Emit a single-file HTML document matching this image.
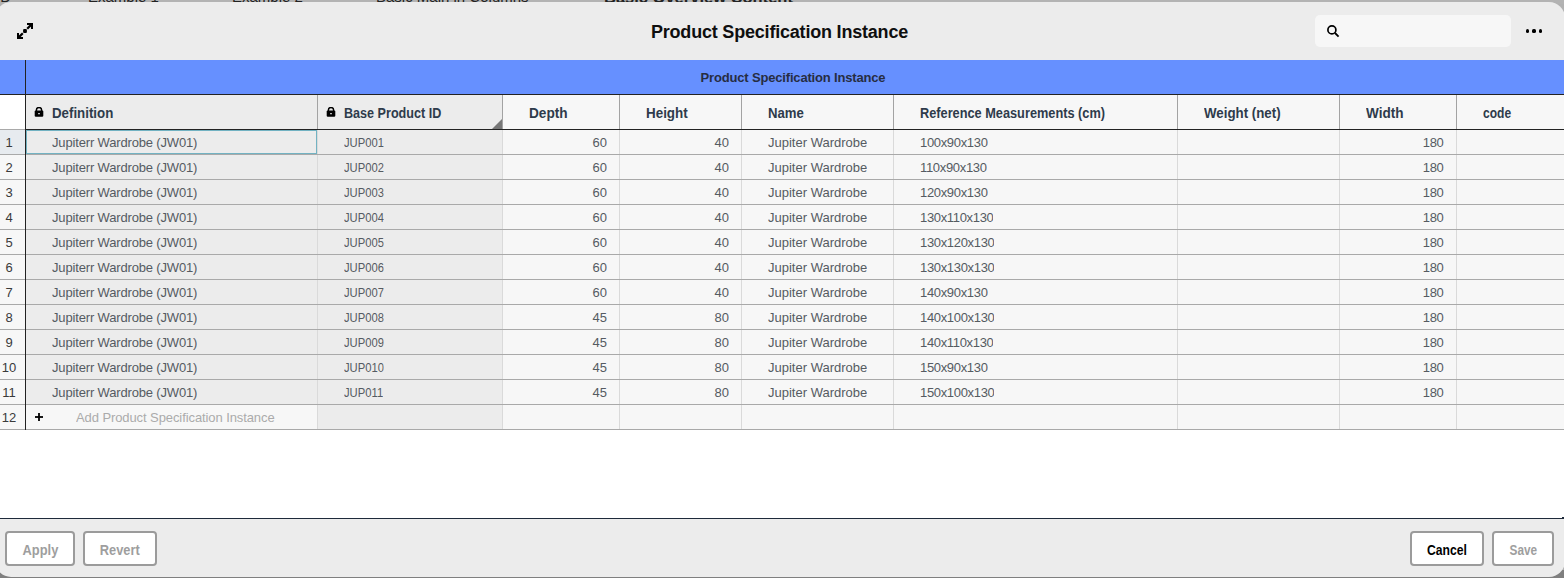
<!DOCTYPE html>
<html><head><meta charset="utf-8"><style>
*{box-sizing:border-box;margin:0;padding:0}
html,body{width:1564px;height:578px;overflow:hidden;background:#b1b1b1;font-family:"Liberation Sans",sans-serif}
.a{position:absolute}
.t{position:absolute;white-space:nowrap}
.hd{font-weight:bold;font-size:14px;color:#2e3b4b;line-height:34px;top:96px}
.cell{position:absolute;font-size:13px;color:#555b62;line-height:24px;margin-top:1px;white-space:nowrap;overflow:hidden}
.rn{position:absolute;font-size:13px;color:#3a3a3a;line-height:24px;left:0;width:18px;margin-top:1px;white-space:nowrap}
.btn{position:absolute;top:531px;height:35px;border:2px solid #9b9b9b;border-radius:4px;background:#fff;font-weight:bold;font-size:14px;line-height:34px;text-align:center;color:#9e9e9e}
</style></head><body>

<div class="a" style="left:0;top:0;width:1564px;height:4px;background:#b3b3b3;overflow:hidden">
<div class="t" style="left:-4px;top:-11px;font-size:15px;line-height:16px;font-weight:normal;color:#222">ID</div>
<div class="t" style="left:88px;top:-11px;font-size:15px;line-height:16px;font-weight:normal;color:#222">Example 1</div>
<div class="t" style="left:232px;top:-11px;font-size:15px;line-height:16px;font-weight:normal;color:#222">Example 2</div>
<div class="t" style="left:376px;top:-11px;font-size:15px;line-height:16px;font-weight:normal;color:#222">Basic Main in Columns</div>
<div class="t" style="left:604px;top:-11px;font-size:16.5px;line-height:16px;font-weight:bold;color:#222">Basic Overview Content</div>
</div>
<div class="a" style="left:0;top:570px;width:1564px;height:8px;background:#7f7f7f"></div>
<div class="a" style="left:-5px;top:2px;width:1570px;height:575px;border-radius:16px;background:#ececec;overflow:hidden"></div>
<svg class="a" style="left:17px;top:23px" width="16" height="16" viewBox="0 0 16 16"><path d="M10 0H16V6H14V2H10Z" fill="#000"/><path d="M14.6 1.4L10.2 5.8" stroke="#000" stroke-width="2.2"/><rect x="6.1" y="6.1" width="3.8" height="3.8" rx="1" fill="#000"/><path d="M0 10H2V14H6V16H0Z" fill="#000"/><path d="M1.4 14.6L5.8 10.2" stroke="#000" stroke-width="2.2"/></svg>
<div class="t" style="left:0;width:1559px;text-align:center;top:23px;font-size:18px;line-height:18px;font-weight:bold;color:#0f0f0f;letter-spacing:-0.2px">Product Specification Instance</div>
<div class="a" style="left:1315px;top:15px;width:196px;height:32px;border-radius:5px;background:#f7f7f7"></div>
<svg class="a" style="left:1326px;top:24px" width="14" height="14" viewBox="0 0 14 14"><circle cx="5.9" cy="5.9" r="4.0" fill="none" stroke="#000" stroke-width="1.7"/><path d="M9 9L12.6 12.6" stroke="#000" stroke-width="1.8"/></svg>
<div class="a" style="left:1526.0px;top:29.4px;width:3.2px;height:3.2px;border-radius:50%;background:#000"></div>
<div class="a" style="left:1532.4px;top:29.4px;width:3.2px;height:3.2px;border-radius:50%;background:#000"></div>
<div class="a" style="left:1538.8000000000002px;top:29.4px;width:3.2px;height:3.2px;border-radius:50%;background:#000"></div>
<div class="a" style="left:0;top:60px;width:1564px;height:459px;background:#fff"></div>
<div class="a" style="left:0;top:60px;width:1564px;height:34px;background:#6690ff"></div>
<div class="t" style="left:24px;width:1538px;text-align:center;top:60px;line-height:35px;font-size:13px;font-weight:bold;color:#262d42;letter-spacing:-0.17px">Product Specification Instance</div>
<div class="a" style="left:0;top:94px;width:1564px;height:1px;background:#222"></div>
<div class="a" style="left:0;top:129px;width:25px;height:1px;background:#a9a9a9"></div>
<div class="a" style="left:26px;top:129px;width:1538px;height:1px;background:#222"></div>
<div class="a" style="left:26px;top:95px;width:291px;height:34px;background:#ececec"></div>
<div class="a" style="left:317px;top:95px;width:1px;height:34px;background:#a3a3a3"></div>
<svg width="10" height="11" viewBox="0 0 10 11" style="position:absolute;left:34px;top:107px"><path d="M2.4 4V3.1A2.6 2.6 0 0 1 7.6 3.1V4" fill="none" stroke="#000" stroke-width="1.45"/><rect x="0.7" y="3.4" width="8.6" height="6.4" rx="1.1" fill="#000"/><rect x="4.2" y="6" width="1.6" height="1.3" rx="0.5" fill="#fff"/></svg>
<div class="t hd" style="left:52px;transform-origin:0 0;transform:scaleX(0.949)">Definition</div>
<div class="a" style="left:318px;top:95px;width:184px;height:34px;background:#ececec"></div>
<div class="a" style="left:502px;top:95px;width:1px;height:34px;background:#a3a3a3"></div>
<svg width="10" height="11" viewBox="0 0 10 11" style="position:absolute;left:326px;top:107px"><path d="M2.4 4V3.1A2.6 2.6 0 0 1 7.6 3.1V4" fill="none" stroke="#000" stroke-width="1.45"/><rect x="0.7" y="3.4" width="8.6" height="6.4" rx="1.1" fill="#000"/><rect x="4.2" y="6" width="1.6" height="1.3" rx="0.5" fill="#fff"/></svg>
<svg class="a" style="left:492px;top:119px" width="10" height="10"><path d="M10 0V10H0Z" fill="#777"/></svg>
<div class="t hd" style="left:344px;transform-origin:0 0;transform:scaleX(0.899)">Base Product ID</div>
<div class="a" style="left:503px;top:95px;width:116px;height:34px;background:#f7f7f7"></div>
<div class="a" style="left:619px;top:95px;width:1px;height:34px;background:#a3a3a3"></div>
<div class="t hd" style="left:529px;transform-origin:0 0;transform:scaleX(0.974)">Depth</div>
<div class="a" style="left:620px;top:95px;width:121px;height:34px;background:#f7f7f7"></div>
<div class="a" style="left:741px;top:95px;width:1px;height:34px;background:#a3a3a3"></div>
<div class="t hd" style="left:646px;transform-origin:0 0;transform:scaleX(0.958)">Height</div>
<div class="a" style="left:742px;top:95px;width:151px;height:34px;background:#f7f7f7"></div>
<div class="a" style="left:893px;top:95px;width:1px;height:34px;background:#a3a3a3"></div>
<div class="t hd" style="left:768px;transform-origin:0 0;transform:scaleX(0.94)">Name</div>
<div class="a" style="left:894px;top:95px;width:283px;height:34px;background:#f7f7f7"></div>
<div class="a" style="left:1177px;top:95px;width:1px;height:34px;background:#a3a3a3"></div>
<div class="t hd" style="left:920px;transform-origin:0 0;transform:scaleX(0.911)">Reference Measurements (cm)</div>
<div class="a" style="left:1178px;top:95px;width:161px;height:34px;background:#f7f7f7"></div>
<div class="a" style="left:1339px;top:95px;width:1px;height:34px;background:#a3a3a3"></div>
<div class="t hd" style="left:1204px;transform-origin:0 0;transform:scaleX(0.95)">Weight (net)</div>
<div class="a" style="left:1340px;top:95px;width:116px;height:34px;background:#f7f7f7"></div>
<div class="a" style="left:1456px;top:95px;width:1px;height:34px;background:#a3a3a3"></div>
<div class="t hd" style="left:1366px;transform-origin:0 0;transform:scaleX(0.968)">Width</div>
<div class="a" style="left:1457px;top:95px;width:107px;height:34px;background:#f7f7f7"></div>
<div class="t hd" style="left:1483px;transform-origin:0 0;transform:scaleX(0.86)">code</div>
<div class="a" style="left:1562px;top:517px;width:2px;height:1px;background:#1e2a3a"></div>
<div class="a" style="left:0;top:130px;width:25px;height:24px;background:#e7ebef"></div>
<div class="rn" style="top:130px;text-align:center">1</div>
<div class="a" style="left:26px;top:130px;width:291px;height:24px;background:#ececec"></div>
<div class="a" style="left:317px;top:130px;width:1px;height:24px;background:#dadada"></div>
<div class="cell" style="left:52px;top:130px;letter-spacing:-0.16px">Jupiterr Wardrobe (JW01)</div>
<div class="a" style="left:318px;top:130px;width:184px;height:24px;background:#ececec"></div>
<div class="a" style="left:502px;top:130px;width:1px;height:24px;background:#dadada"></div>
<div class="cell" style="left:344px;top:130px;transform-origin:0 0;transform:scaleX(0.865)">JUP001</div>
<div class="a" style="left:503px;top:130px;width:116px;height:24px;background:#f7f7f7"></div>
<div class="a" style="left:619px;top:130px;width:1px;height:24px;background:#dadada"></div>
<div class="cell" style="left:503px;width:103.85px;text-align:right;top:130px;letter-spacing:-0.1px">60</div>
<div class="a" style="left:620px;top:130px;width:121px;height:24px;background:#f7f7f7"></div>
<div class="a" style="left:741px;top:130px;width:1px;height:24px;background:#dadada"></div>
<div class="cell" style="left:620px;width:108.85px;text-align:right;top:130px;letter-spacing:-0.1px">40</div>
<div class="a" style="left:742px;top:130px;width:151px;height:24px;background:#f7f7f7"></div>
<div class="a" style="left:893px;top:130px;width:1px;height:24px;background:#dadada"></div>
<div class="cell" style="left:768px;top:130px;letter-spacing:0px">Jupiter Wardrobe</div>
<div class="a" style="left:894px;top:130px;width:283px;height:24px;background:#f7f7f7"></div>
<div class="a" style="left:1177px;top:130px;width:1px;height:24px;background:#dadada"></div>
<div class="cell" style="left:920px;top:130px;letter-spacing:-0.33px">100x90x130</div>
<div class="a" style="left:1178px;top:130px;width:161px;height:24px;background:#f7f7f7"></div>
<div class="a" style="left:1339px;top:130px;width:1px;height:24px;background:#dadada"></div>
<div class="a" style="left:1340px;top:130px;width:116px;height:24px;background:#f7f7f7"></div>
<div class="a" style="left:1456px;top:130px;width:1px;height:24px;background:#dadada"></div>
<div class="cell" style="left:1340px;width:103.55px;text-align:right;top:130px;letter-spacing:-0.3px">180</div>
<div class="a" style="left:1457px;top:130px;width:107px;height:24px;background:#f7f7f7"></div>
<div class="a" style="left:0;top:154px;width:1564px;height:1px;background:#a9a9a9"></div>
<div class="a" style="left:0;top:155px;width:25px;height:24px;background:#f7f7f7"></div>
<div class="rn" style="top:155px;text-align:center">2</div>
<div class="a" style="left:26px;top:155px;width:291px;height:24px;background:#ececec"></div>
<div class="a" style="left:317px;top:155px;width:1px;height:24px;background:#dadada"></div>
<div class="cell" style="left:52px;top:155px;letter-spacing:-0.16px">Jupiterr Wardrobe (JW01)</div>
<div class="a" style="left:318px;top:155px;width:184px;height:24px;background:#ececec"></div>
<div class="a" style="left:502px;top:155px;width:1px;height:24px;background:#dadada"></div>
<div class="cell" style="left:344px;top:155px;transform-origin:0 0;transform:scaleX(0.865)">JUP002</div>
<div class="a" style="left:503px;top:155px;width:116px;height:24px;background:#f7f7f7"></div>
<div class="a" style="left:619px;top:155px;width:1px;height:24px;background:#dadada"></div>
<div class="cell" style="left:503px;width:103.85px;text-align:right;top:155px;letter-spacing:-0.1px">60</div>
<div class="a" style="left:620px;top:155px;width:121px;height:24px;background:#f7f7f7"></div>
<div class="a" style="left:741px;top:155px;width:1px;height:24px;background:#dadada"></div>
<div class="cell" style="left:620px;width:108.85px;text-align:right;top:155px;letter-spacing:-0.1px">40</div>
<div class="a" style="left:742px;top:155px;width:151px;height:24px;background:#f7f7f7"></div>
<div class="a" style="left:893px;top:155px;width:1px;height:24px;background:#dadada"></div>
<div class="cell" style="left:768px;top:155px;letter-spacing:0px">Jupiter Wardrobe</div>
<div class="a" style="left:894px;top:155px;width:283px;height:24px;background:#f7f7f7"></div>
<div class="a" style="left:1177px;top:155px;width:1px;height:24px;background:#dadada"></div>
<div class="cell" style="left:920px;top:155px;letter-spacing:-0.33px">110x90x130</div>
<div class="a" style="left:1178px;top:155px;width:161px;height:24px;background:#f7f7f7"></div>
<div class="a" style="left:1339px;top:155px;width:1px;height:24px;background:#dadada"></div>
<div class="a" style="left:1340px;top:155px;width:116px;height:24px;background:#f7f7f7"></div>
<div class="a" style="left:1456px;top:155px;width:1px;height:24px;background:#dadada"></div>
<div class="cell" style="left:1340px;width:103.55px;text-align:right;top:155px;letter-spacing:-0.3px">180</div>
<div class="a" style="left:1457px;top:155px;width:107px;height:24px;background:#f7f7f7"></div>
<div class="a" style="left:0;top:179px;width:1564px;height:1px;background:#a9a9a9"></div>
<div class="a" style="left:0;top:180px;width:25px;height:24px;background:#f7f7f7"></div>
<div class="rn" style="top:180px;text-align:center">3</div>
<div class="a" style="left:26px;top:180px;width:291px;height:24px;background:#ececec"></div>
<div class="a" style="left:317px;top:180px;width:1px;height:24px;background:#dadada"></div>
<div class="cell" style="left:52px;top:180px;letter-spacing:-0.16px">Jupiterr Wardrobe (JW01)</div>
<div class="a" style="left:318px;top:180px;width:184px;height:24px;background:#ececec"></div>
<div class="a" style="left:502px;top:180px;width:1px;height:24px;background:#dadada"></div>
<div class="cell" style="left:344px;top:180px;transform-origin:0 0;transform:scaleX(0.865)">JUP003</div>
<div class="a" style="left:503px;top:180px;width:116px;height:24px;background:#f7f7f7"></div>
<div class="a" style="left:619px;top:180px;width:1px;height:24px;background:#dadada"></div>
<div class="cell" style="left:503px;width:103.85px;text-align:right;top:180px;letter-spacing:-0.1px">60</div>
<div class="a" style="left:620px;top:180px;width:121px;height:24px;background:#f7f7f7"></div>
<div class="a" style="left:741px;top:180px;width:1px;height:24px;background:#dadada"></div>
<div class="cell" style="left:620px;width:108.85px;text-align:right;top:180px;letter-spacing:-0.1px">40</div>
<div class="a" style="left:742px;top:180px;width:151px;height:24px;background:#f7f7f7"></div>
<div class="a" style="left:893px;top:180px;width:1px;height:24px;background:#dadada"></div>
<div class="cell" style="left:768px;top:180px;letter-spacing:0px">Jupiter Wardrobe</div>
<div class="a" style="left:894px;top:180px;width:283px;height:24px;background:#f7f7f7"></div>
<div class="a" style="left:1177px;top:180px;width:1px;height:24px;background:#dadada"></div>
<div class="cell" style="left:920px;top:180px;letter-spacing:-0.33px">120x90x130</div>
<div class="a" style="left:1178px;top:180px;width:161px;height:24px;background:#f7f7f7"></div>
<div class="a" style="left:1339px;top:180px;width:1px;height:24px;background:#dadada"></div>
<div class="a" style="left:1340px;top:180px;width:116px;height:24px;background:#f7f7f7"></div>
<div class="a" style="left:1456px;top:180px;width:1px;height:24px;background:#dadada"></div>
<div class="cell" style="left:1340px;width:103.55px;text-align:right;top:180px;letter-spacing:-0.3px">180</div>
<div class="a" style="left:1457px;top:180px;width:107px;height:24px;background:#f7f7f7"></div>
<div class="a" style="left:0;top:204px;width:1564px;height:1px;background:#a9a9a9"></div>
<div class="a" style="left:0;top:205px;width:25px;height:24px;background:#f7f7f7"></div>
<div class="rn" style="top:205px;text-align:center">4</div>
<div class="a" style="left:26px;top:205px;width:291px;height:24px;background:#ececec"></div>
<div class="a" style="left:317px;top:205px;width:1px;height:24px;background:#dadada"></div>
<div class="cell" style="left:52px;top:205px;letter-spacing:-0.16px">Jupiterr Wardrobe (JW01)</div>
<div class="a" style="left:318px;top:205px;width:184px;height:24px;background:#ececec"></div>
<div class="a" style="left:502px;top:205px;width:1px;height:24px;background:#dadada"></div>
<div class="cell" style="left:344px;top:205px;transform-origin:0 0;transform:scaleX(0.865)">JUP004</div>
<div class="a" style="left:503px;top:205px;width:116px;height:24px;background:#f7f7f7"></div>
<div class="a" style="left:619px;top:205px;width:1px;height:24px;background:#dadada"></div>
<div class="cell" style="left:503px;width:103.85px;text-align:right;top:205px;letter-spacing:-0.1px">60</div>
<div class="a" style="left:620px;top:205px;width:121px;height:24px;background:#f7f7f7"></div>
<div class="a" style="left:741px;top:205px;width:1px;height:24px;background:#dadada"></div>
<div class="cell" style="left:620px;width:108.85px;text-align:right;top:205px;letter-spacing:-0.1px">40</div>
<div class="a" style="left:742px;top:205px;width:151px;height:24px;background:#f7f7f7"></div>
<div class="a" style="left:893px;top:205px;width:1px;height:24px;background:#dadada"></div>
<div class="cell" style="left:768px;top:205px;letter-spacing:0px">Jupiter Wardrobe</div>
<div class="a" style="left:894px;top:205px;width:283px;height:24px;background:#f7f7f7"></div>
<div class="a" style="left:1177px;top:205px;width:1px;height:24px;background:#dadada"></div>
<div class="cell" style="left:920px;top:205px;letter-spacing:-0.33px">130x110x130</div>
<div class="a" style="left:1178px;top:205px;width:161px;height:24px;background:#f7f7f7"></div>
<div class="a" style="left:1339px;top:205px;width:1px;height:24px;background:#dadada"></div>
<div class="a" style="left:1340px;top:205px;width:116px;height:24px;background:#f7f7f7"></div>
<div class="a" style="left:1456px;top:205px;width:1px;height:24px;background:#dadada"></div>
<div class="cell" style="left:1340px;width:103.55px;text-align:right;top:205px;letter-spacing:-0.3px">180</div>
<div class="a" style="left:1457px;top:205px;width:107px;height:24px;background:#f7f7f7"></div>
<div class="a" style="left:0;top:229px;width:1564px;height:1px;background:#a9a9a9"></div>
<div class="a" style="left:0;top:230px;width:25px;height:24px;background:#f7f7f7"></div>
<div class="rn" style="top:230px;text-align:center">5</div>
<div class="a" style="left:26px;top:230px;width:291px;height:24px;background:#ececec"></div>
<div class="a" style="left:317px;top:230px;width:1px;height:24px;background:#dadada"></div>
<div class="cell" style="left:52px;top:230px;letter-spacing:-0.16px">Jupiterr Wardrobe (JW01)</div>
<div class="a" style="left:318px;top:230px;width:184px;height:24px;background:#ececec"></div>
<div class="a" style="left:502px;top:230px;width:1px;height:24px;background:#dadada"></div>
<div class="cell" style="left:344px;top:230px;transform-origin:0 0;transform:scaleX(0.865)">JUP005</div>
<div class="a" style="left:503px;top:230px;width:116px;height:24px;background:#f7f7f7"></div>
<div class="a" style="left:619px;top:230px;width:1px;height:24px;background:#dadada"></div>
<div class="cell" style="left:503px;width:103.85px;text-align:right;top:230px;letter-spacing:-0.1px">60</div>
<div class="a" style="left:620px;top:230px;width:121px;height:24px;background:#f7f7f7"></div>
<div class="a" style="left:741px;top:230px;width:1px;height:24px;background:#dadada"></div>
<div class="cell" style="left:620px;width:108.85px;text-align:right;top:230px;letter-spacing:-0.1px">40</div>
<div class="a" style="left:742px;top:230px;width:151px;height:24px;background:#f7f7f7"></div>
<div class="a" style="left:893px;top:230px;width:1px;height:24px;background:#dadada"></div>
<div class="cell" style="left:768px;top:230px;letter-spacing:0px">Jupiter Wardrobe</div>
<div class="a" style="left:894px;top:230px;width:283px;height:24px;background:#f7f7f7"></div>
<div class="a" style="left:1177px;top:230px;width:1px;height:24px;background:#dadada"></div>
<div class="cell" style="left:920px;top:230px;letter-spacing:-0.33px">130x120x130</div>
<div class="a" style="left:1178px;top:230px;width:161px;height:24px;background:#f7f7f7"></div>
<div class="a" style="left:1339px;top:230px;width:1px;height:24px;background:#dadada"></div>
<div class="a" style="left:1340px;top:230px;width:116px;height:24px;background:#f7f7f7"></div>
<div class="a" style="left:1456px;top:230px;width:1px;height:24px;background:#dadada"></div>
<div class="cell" style="left:1340px;width:103.55px;text-align:right;top:230px;letter-spacing:-0.3px">180</div>
<div class="a" style="left:1457px;top:230px;width:107px;height:24px;background:#f7f7f7"></div>
<div class="a" style="left:0;top:254px;width:1564px;height:1px;background:#a9a9a9"></div>
<div class="a" style="left:0;top:255px;width:25px;height:24px;background:#f7f7f7"></div>
<div class="rn" style="top:255px;text-align:center">6</div>
<div class="a" style="left:26px;top:255px;width:291px;height:24px;background:#ececec"></div>
<div class="a" style="left:317px;top:255px;width:1px;height:24px;background:#dadada"></div>
<div class="cell" style="left:52px;top:255px;letter-spacing:-0.16px">Jupiterr Wardrobe (JW01)</div>
<div class="a" style="left:318px;top:255px;width:184px;height:24px;background:#ececec"></div>
<div class="a" style="left:502px;top:255px;width:1px;height:24px;background:#dadada"></div>
<div class="cell" style="left:344px;top:255px;transform-origin:0 0;transform:scaleX(0.865)">JUP006</div>
<div class="a" style="left:503px;top:255px;width:116px;height:24px;background:#f7f7f7"></div>
<div class="a" style="left:619px;top:255px;width:1px;height:24px;background:#dadada"></div>
<div class="cell" style="left:503px;width:103.85px;text-align:right;top:255px;letter-spacing:-0.1px">60</div>
<div class="a" style="left:620px;top:255px;width:121px;height:24px;background:#f7f7f7"></div>
<div class="a" style="left:741px;top:255px;width:1px;height:24px;background:#dadada"></div>
<div class="cell" style="left:620px;width:108.85px;text-align:right;top:255px;letter-spacing:-0.1px">40</div>
<div class="a" style="left:742px;top:255px;width:151px;height:24px;background:#f7f7f7"></div>
<div class="a" style="left:893px;top:255px;width:1px;height:24px;background:#dadada"></div>
<div class="cell" style="left:768px;top:255px;letter-spacing:0px">Jupiter Wardrobe</div>
<div class="a" style="left:894px;top:255px;width:283px;height:24px;background:#f7f7f7"></div>
<div class="a" style="left:1177px;top:255px;width:1px;height:24px;background:#dadada"></div>
<div class="cell" style="left:920px;top:255px;letter-spacing:-0.33px">130x130x130</div>
<div class="a" style="left:1178px;top:255px;width:161px;height:24px;background:#f7f7f7"></div>
<div class="a" style="left:1339px;top:255px;width:1px;height:24px;background:#dadada"></div>
<div class="a" style="left:1340px;top:255px;width:116px;height:24px;background:#f7f7f7"></div>
<div class="a" style="left:1456px;top:255px;width:1px;height:24px;background:#dadada"></div>
<div class="cell" style="left:1340px;width:103.55px;text-align:right;top:255px;letter-spacing:-0.3px">180</div>
<div class="a" style="left:1457px;top:255px;width:107px;height:24px;background:#f7f7f7"></div>
<div class="a" style="left:0;top:279px;width:1564px;height:1px;background:#a9a9a9"></div>
<div class="a" style="left:0;top:280px;width:25px;height:24px;background:#f7f7f7"></div>
<div class="rn" style="top:280px;text-align:center">7</div>
<div class="a" style="left:26px;top:280px;width:291px;height:24px;background:#ececec"></div>
<div class="a" style="left:317px;top:280px;width:1px;height:24px;background:#dadada"></div>
<div class="cell" style="left:52px;top:280px;letter-spacing:-0.16px">Jupiterr Wardrobe (JW01)</div>
<div class="a" style="left:318px;top:280px;width:184px;height:24px;background:#ececec"></div>
<div class="a" style="left:502px;top:280px;width:1px;height:24px;background:#dadada"></div>
<div class="cell" style="left:344px;top:280px;transform-origin:0 0;transform:scaleX(0.865)">JUP007</div>
<div class="a" style="left:503px;top:280px;width:116px;height:24px;background:#f7f7f7"></div>
<div class="a" style="left:619px;top:280px;width:1px;height:24px;background:#dadada"></div>
<div class="cell" style="left:503px;width:103.85px;text-align:right;top:280px;letter-spacing:-0.1px">60</div>
<div class="a" style="left:620px;top:280px;width:121px;height:24px;background:#f7f7f7"></div>
<div class="a" style="left:741px;top:280px;width:1px;height:24px;background:#dadada"></div>
<div class="cell" style="left:620px;width:108.85px;text-align:right;top:280px;letter-spacing:-0.1px">40</div>
<div class="a" style="left:742px;top:280px;width:151px;height:24px;background:#f7f7f7"></div>
<div class="a" style="left:893px;top:280px;width:1px;height:24px;background:#dadada"></div>
<div class="cell" style="left:768px;top:280px;letter-spacing:0px">Jupiter Wardrobe</div>
<div class="a" style="left:894px;top:280px;width:283px;height:24px;background:#f7f7f7"></div>
<div class="a" style="left:1177px;top:280px;width:1px;height:24px;background:#dadada"></div>
<div class="cell" style="left:920px;top:280px;letter-spacing:-0.33px">140x90x130</div>
<div class="a" style="left:1178px;top:280px;width:161px;height:24px;background:#f7f7f7"></div>
<div class="a" style="left:1339px;top:280px;width:1px;height:24px;background:#dadada"></div>
<div class="a" style="left:1340px;top:280px;width:116px;height:24px;background:#f7f7f7"></div>
<div class="a" style="left:1456px;top:280px;width:1px;height:24px;background:#dadada"></div>
<div class="cell" style="left:1340px;width:103.55px;text-align:right;top:280px;letter-spacing:-0.3px">180</div>
<div class="a" style="left:1457px;top:280px;width:107px;height:24px;background:#f7f7f7"></div>
<div class="a" style="left:0;top:304px;width:1564px;height:1px;background:#a9a9a9"></div>
<div class="a" style="left:0;top:305px;width:25px;height:24px;background:#f7f7f7"></div>
<div class="rn" style="top:305px;text-align:center">8</div>
<div class="a" style="left:26px;top:305px;width:291px;height:24px;background:#ececec"></div>
<div class="a" style="left:317px;top:305px;width:1px;height:24px;background:#dadada"></div>
<div class="cell" style="left:52px;top:305px;letter-spacing:-0.16px">Jupiterr Wardrobe (JW01)</div>
<div class="a" style="left:318px;top:305px;width:184px;height:24px;background:#ececec"></div>
<div class="a" style="left:502px;top:305px;width:1px;height:24px;background:#dadada"></div>
<div class="cell" style="left:344px;top:305px;transform-origin:0 0;transform:scaleX(0.865)">JUP008</div>
<div class="a" style="left:503px;top:305px;width:116px;height:24px;background:#f7f7f7"></div>
<div class="a" style="left:619px;top:305px;width:1px;height:24px;background:#dadada"></div>
<div class="cell" style="left:503px;width:103.85px;text-align:right;top:305px;letter-spacing:-0.1px">45</div>
<div class="a" style="left:620px;top:305px;width:121px;height:24px;background:#f7f7f7"></div>
<div class="a" style="left:741px;top:305px;width:1px;height:24px;background:#dadada"></div>
<div class="cell" style="left:620px;width:108.85px;text-align:right;top:305px;letter-spacing:-0.1px">80</div>
<div class="a" style="left:742px;top:305px;width:151px;height:24px;background:#f7f7f7"></div>
<div class="a" style="left:893px;top:305px;width:1px;height:24px;background:#dadada"></div>
<div class="cell" style="left:768px;top:305px;letter-spacing:0px">Jupiter Wardrobe</div>
<div class="a" style="left:894px;top:305px;width:283px;height:24px;background:#f7f7f7"></div>
<div class="a" style="left:1177px;top:305px;width:1px;height:24px;background:#dadada"></div>
<div class="cell" style="left:920px;top:305px;letter-spacing:-0.33px">140x100x130</div>
<div class="a" style="left:1178px;top:305px;width:161px;height:24px;background:#f7f7f7"></div>
<div class="a" style="left:1339px;top:305px;width:1px;height:24px;background:#dadada"></div>
<div class="a" style="left:1340px;top:305px;width:116px;height:24px;background:#f7f7f7"></div>
<div class="a" style="left:1456px;top:305px;width:1px;height:24px;background:#dadada"></div>
<div class="cell" style="left:1340px;width:103.55px;text-align:right;top:305px;letter-spacing:-0.3px">180</div>
<div class="a" style="left:1457px;top:305px;width:107px;height:24px;background:#f7f7f7"></div>
<div class="a" style="left:0;top:329px;width:1564px;height:1px;background:#a9a9a9"></div>
<div class="a" style="left:0;top:330px;width:25px;height:24px;background:#f7f7f7"></div>
<div class="rn" style="top:330px;text-align:center">9</div>
<div class="a" style="left:26px;top:330px;width:291px;height:24px;background:#ececec"></div>
<div class="a" style="left:317px;top:330px;width:1px;height:24px;background:#dadada"></div>
<div class="cell" style="left:52px;top:330px;letter-spacing:-0.16px">Jupiterr Wardrobe (JW01)</div>
<div class="a" style="left:318px;top:330px;width:184px;height:24px;background:#ececec"></div>
<div class="a" style="left:502px;top:330px;width:1px;height:24px;background:#dadada"></div>
<div class="cell" style="left:344px;top:330px;transform-origin:0 0;transform:scaleX(0.865)">JUP009</div>
<div class="a" style="left:503px;top:330px;width:116px;height:24px;background:#f7f7f7"></div>
<div class="a" style="left:619px;top:330px;width:1px;height:24px;background:#dadada"></div>
<div class="cell" style="left:503px;width:103.85px;text-align:right;top:330px;letter-spacing:-0.1px">45</div>
<div class="a" style="left:620px;top:330px;width:121px;height:24px;background:#f7f7f7"></div>
<div class="a" style="left:741px;top:330px;width:1px;height:24px;background:#dadada"></div>
<div class="cell" style="left:620px;width:108.85px;text-align:right;top:330px;letter-spacing:-0.1px">80</div>
<div class="a" style="left:742px;top:330px;width:151px;height:24px;background:#f7f7f7"></div>
<div class="a" style="left:893px;top:330px;width:1px;height:24px;background:#dadada"></div>
<div class="cell" style="left:768px;top:330px;letter-spacing:0px">Jupiter Wardrobe</div>
<div class="a" style="left:894px;top:330px;width:283px;height:24px;background:#f7f7f7"></div>
<div class="a" style="left:1177px;top:330px;width:1px;height:24px;background:#dadada"></div>
<div class="cell" style="left:920px;top:330px;letter-spacing:-0.33px">140x110x130</div>
<div class="a" style="left:1178px;top:330px;width:161px;height:24px;background:#f7f7f7"></div>
<div class="a" style="left:1339px;top:330px;width:1px;height:24px;background:#dadada"></div>
<div class="a" style="left:1340px;top:330px;width:116px;height:24px;background:#f7f7f7"></div>
<div class="a" style="left:1456px;top:330px;width:1px;height:24px;background:#dadada"></div>
<div class="cell" style="left:1340px;width:103.55px;text-align:right;top:330px;letter-spacing:-0.3px">180</div>
<div class="a" style="left:1457px;top:330px;width:107px;height:24px;background:#f7f7f7"></div>
<div class="a" style="left:0;top:354px;width:1564px;height:1px;background:#a9a9a9"></div>
<div class="a" style="left:0;top:355px;width:25px;height:24px;background:#f7f7f7"></div>
<div class="rn" style="top:355px;text-align:center">10</div>
<div class="a" style="left:26px;top:355px;width:291px;height:24px;background:#ececec"></div>
<div class="a" style="left:317px;top:355px;width:1px;height:24px;background:#dadada"></div>
<div class="cell" style="left:52px;top:355px;letter-spacing:-0.16px">Jupiterr Wardrobe (JW01)</div>
<div class="a" style="left:318px;top:355px;width:184px;height:24px;background:#ececec"></div>
<div class="a" style="left:502px;top:355px;width:1px;height:24px;background:#dadada"></div>
<div class="cell" style="left:344px;top:355px;transform-origin:0 0;transform:scaleX(0.865)">JUP010</div>
<div class="a" style="left:503px;top:355px;width:116px;height:24px;background:#f7f7f7"></div>
<div class="a" style="left:619px;top:355px;width:1px;height:24px;background:#dadada"></div>
<div class="cell" style="left:503px;width:103.85px;text-align:right;top:355px;letter-spacing:-0.1px">45</div>
<div class="a" style="left:620px;top:355px;width:121px;height:24px;background:#f7f7f7"></div>
<div class="a" style="left:741px;top:355px;width:1px;height:24px;background:#dadada"></div>
<div class="cell" style="left:620px;width:108.85px;text-align:right;top:355px;letter-spacing:-0.1px">80</div>
<div class="a" style="left:742px;top:355px;width:151px;height:24px;background:#f7f7f7"></div>
<div class="a" style="left:893px;top:355px;width:1px;height:24px;background:#dadada"></div>
<div class="cell" style="left:768px;top:355px;letter-spacing:0px">Jupiter Wardrobe</div>
<div class="a" style="left:894px;top:355px;width:283px;height:24px;background:#f7f7f7"></div>
<div class="a" style="left:1177px;top:355px;width:1px;height:24px;background:#dadada"></div>
<div class="cell" style="left:920px;top:355px;letter-spacing:-0.33px">150x90x130</div>
<div class="a" style="left:1178px;top:355px;width:161px;height:24px;background:#f7f7f7"></div>
<div class="a" style="left:1339px;top:355px;width:1px;height:24px;background:#dadada"></div>
<div class="a" style="left:1340px;top:355px;width:116px;height:24px;background:#f7f7f7"></div>
<div class="a" style="left:1456px;top:355px;width:1px;height:24px;background:#dadada"></div>
<div class="cell" style="left:1340px;width:103.55px;text-align:right;top:355px;letter-spacing:-0.3px">180</div>
<div class="a" style="left:1457px;top:355px;width:107px;height:24px;background:#f7f7f7"></div>
<div class="a" style="left:0;top:379px;width:1564px;height:1px;background:#a9a9a9"></div>
<div class="a" style="left:0;top:380px;width:25px;height:24px;background:#f7f7f7"></div>
<div class="rn" style="top:380px;text-align:center">11</div>
<div class="a" style="left:26px;top:380px;width:291px;height:24px;background:#ececec"></div>
<div class="a" style="left:317px;top:380px;width:1px;height:24px;background:#dadada"></div>
<div class="cell" style="left:52px;top:380px;letter-spacing:-0.16px">Jupiterr Wardrobe (JW01)</div>
<div class="a" style="left:318px;top:380px;width:184px;height:24px;background:#ececec"></div>
<div class="a" style="left:502px;top:380px;width:1px;height:24px;background:#dadada"></div>
<div class="cell" style="left:344px;top:380px;transform-origin:0 0;transform:scaleX(0.865)">JUP011</div>
<div class="a" style="left:503px;top:380px;width:116px;height:24px;background:#f7f7f7"></div>
<div class="a" style="left:619px;top:380px;width:1px;height:24px;background:#dadada"></div>
<div class="cell" style="left:503px;width:103.85px;text-align:right;top:380px;letter-spacing:-0.1px">45</div>
<div class="a" style="left:620px;top:380px;width:121px;height:24px;background:#f7f7f7"></div>
<div class="a" style="left:741px;top:380px;width:1px;height:24px;background:#dadada"></div>
<div class="cell" style="left:620px;width:108.85px;text-align:right;top:380px;letter-spacing:-0.1px">80</div>
<div class="a" style="left:742px;top:380px;width:151px;height:24px;background:#f7f7f7"></div>
<div class="a" style="left:893px;top:380px;width:1px;height:24px;background:#dadada"></div>
<div class="cell" style="left:768px;top:380px;letter-spacing:0px">Jupiter Wardrobe</div>
<div class="a" style="left:894px;top:380px;width:283px;height:24px;background:#f7f7f7"></div>
<div class="a" style="left:1177px;top:380px;width:1px;height:24px;background:#dadada"></div>
<div class="cell" style="left:920px;top:380px;letter-spacing:-0.33px">150x100x130</div>
<div class="a" style="left:1178px;top:380px;width:161px;height:24px;background:#f7f7f7"></div>
<div class="a" style="left:1339px;top:380px;width:1px;height:24px;background:#dadada"></div>
<div class="a" style="left:1340px;top:380px;width:116px;height:24px;background:#f7f7f7"></div>
<div class="a" style="left:1456px;top:380px;width:1px;height:24px;background:#dadada"></div>
<div class="cell" style="left:1340px;width:103.55px;text-align:right;top:380px;letter-spacing:-0.3px">180</div>
<div class="a" style="left:1457px;top:380px;width:107px;height:24px;background:#f7f7f7"></div>
<div class="a" style="left:0;top:404px;width:1564px;height:1px;background:#a9a9a9"></div>
<div class="a" style="left:0;top:405px;width:25px;height:24px;background:#f7f7f7"></div>
<div class="rn" style="top:405px;text-align:center">12</div>
<div class="a" style="left:26px;top:405px;width:291px;height:24px;background:#f7f7f7"></div>
<div class="a" style="left:317px;top:405px;width:1px;height:24px;background:#dadada"></div>
<div class="a" style="left:318px;top:405px;width:184px;height:24px;background:#ececec"></div>
<div class="a" style="left:502px;top:405px;width:1px;height:24px;background:#dadada"></div>
<div class="a" style="left:503px;top:405px;width:116px;height:24px;background:#f7f7f7"></div>
<div class="a" style="left:619px;top:405px;width:1px;height:24px;background:#dadada"></div>
<div class="a" style="left:620px;top:405px;width:121px;height:24px;background:#f7f7f7"></div>
<div class="a" style="left:741px;top:405px;width:1px;height:24px;background:#dadada"></div>
<div class="a" style="left:742px;top:405px;width:151px;height:24px;background:#f7f7f7"></div>
<div class="a" style="left:893px;top:405px;width:1px;height:24px;background:#dadada"></div>
<div class="a" style="left:894px;top:405px;width:283px;height:24px;background:#f7f7f7"></div>
<div class="a" style="left:1177px;top:405px;width:1px;height:24px;background:#dadada"></div>
<div class="a" style="left:1178px;top:405px;width:161px;height:24px;background:#f7f7f7"></div>
<div class="a" style="left:1339px;top:405px;width:1px;height:24px;background:#dadada"></div>
<div class="a" style="left:1340px;top:405px;width:116px;height:24px;background:#f7f7f7"></div>
<div class="a" style="left:1456px;top:405px;width:1px;height:24px;background:#dadada"></div>
<div class="a" style="left:1457px;top:405px;width:107px;height:24px;background:#f7f7f7"></div>
<div class="a" style="left:0;top:429px;width:1564px;height:1px;background:#a9a9a9"></div>
<svg class="a" style="left:35px;top:413px" width="8" height="8" viewBox="0 0 8 8"><rect x="0" y="3.1" width="8" height="1.8" fill="#000"/><rect x="3.1" y="0" width="1.8" height="8" fill="#000"/></svg>
<div class="cell" style="left:76px;top:405px;color:#ababab;letter-spacing:-0.09px">Add Product Specification Instance</div>
<div class="a" style="left:26px;top:130px;width:291px;height:24px;border:1.5px solid #72b2c2"></div>
<div class="a" style="left:25px;top:60px;width:1px;height:370px;background:#222"></div>
<div class="a" style="left:0;top:518px;width:1564px;height:1px;background:#1e2a3a"></div>
<div class="btn" style="left:5px;width:70px"><span style="display:inline-block;transform:scaleX(0.92)">Apply</span></div>
<div class="btn" style="left:83px;width:74px"><span style="display:inline-block;transform:scaleX(0.915)">Revert</span></div>
<div class="btn" style="left:1410px;width:74px;color:#000"><span style="display:inline-block;transform:scaleX(0.867)">Cancel</span></div>
<div class="btn" style="left:1492px;width:62px"><span style="display:inline-block;transform:scaleX(0.843)">Save</span></div>
</body></html>
